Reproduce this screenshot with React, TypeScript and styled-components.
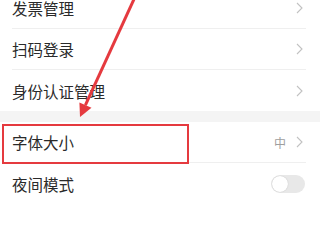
import React from "react";
import styled, { createGlobalStyle } from "styled-components";

const Global = createGlobalStyle`
  html, body { margin: 0; padding: 0; background: #ffffff; overflow: hidden; }
  body { font-family: "Noto Sans CJK SC", "Noto Sans", sans-serif; }
`;

const Screen = styled.div`
  position: relative;
  width: 320px;
  height: 202px;
  overflow: hidden;
  background: #ffffff;
`;

const Scroller = styled.div`
  margin-top: -12px;
  display: flex;
  flex-direction: column;
`;

const Group = styled.div`
  background: #ffffff;
  display: flex;
  flex-direction: column;
`;

const GroupGap = styled.div`
  height: 11px;
  background: #f4f4f4;
`;

const Row = styled.div<{ $divider?: boolean }>`
  height: 41px;
  margin-left: 12px;
  margin-right: 14px;
  padding-right: 3px;
  box-sizing: border-box;
  display: flex;
  align-items: center;
  border-bottom: ${(p) => (p.$divider ? "1px solid #efefef" : "none")};
`;

const Label = styled.span`
  flex: 1;
  font-size: 15.5px;
  color: #2a2a2a;
`;

const Value = styled.span`
  font-size: 12px;
  color: #9e9e9e;
  margin-right: 10px;
`;

const Chevron = () => (
  <svg width="7" height="12" viewBox="0 0 7 12">
    <path d="M1 1 L6 6 L1 11" fill="none" stroke="#c2c2c2" strokeWidth="1.1" />
  </svg>
);

const Toggle = styled.div`
  width: 34px;
  height: 18px;
  border-radius: 9px;
  background: #e8e8e8;
  position: relative;
  margin-right: -2px;
  &::after {
    content: "";
    position: absolute;
    left: 1px;
    top: 1px;
    width: 16px;
    height: 16px;
    border-radius: 50%;
    background: #ffffff;
    box-shadow: 0 0 1px rgba(0, 0, 0, 0.25);
  }
`;

const Highlight = styled.div`
  position: absolute;
  left: 2px;
  top: 124px;
  width: 187px;
  height: 40px;
  box-sizing: border-box;
  border: 2px solid #e53a3f;
  pointer-events: none;
`;

const ArrowLayer = styled.svg`
  position: absolute;
  left: 0;
  top: 0;
  pointer-events: none;
`;

type Item = { label: string; value?: string; toggle?: boolean; divider?: boolean };

const groupA: Item[] = [
  { label: "发票管理", divider: true },
  { label: "扫码登录", divider: true },
  { label: "身份认证管理" },
];

const groupB: Item[] = [
  { label: "字体大小", value: "中", divider: true },
  { label: "夜间模式", toggle: true },
];

const renderRow = (it: Item) => (
  <Row key={it.label} $divider={it.divider}>
    <Label>{it.label}</Label>
    {it.value && <Value>{it.value}</Value>}
    {it.toggle ? <Toggle /> : <Chevron />}
  </Row>
);

export default function App() {
  return (
    <>
      <Global />
      <Screen>
        <Scroller>
          <Group>{groupA.map(renderRow)}</Group>
          <GroupGap />
          <Group>{groupB.map(renderRow)}</Group>
        </Scroller>
        <Highlight />
        <ArrowLayer width="320" height="202" viewBox="0 0 320 202">
          <line x1="135" y1="-3" x2="85.4" y2="105.2" stroke="#e53a3f" strokeWidth="3" />
          <polygon points="80,117 91.5,107.7 79.4,102.5" fill="#e53a3f" />
        </ArrowLayer>
      </Screen>
    </>
  );
}
